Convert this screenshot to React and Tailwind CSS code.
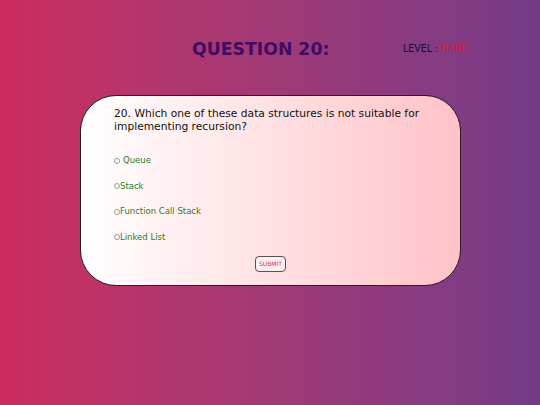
import React, { useState } from 'react';

const options = ['Queue', 'Stack', 'Function Call Stack', 'Linked List'];

const App = () => {
  const [selected, setSelected] = useState(null);

  return (
    <div
      className="w-[540px] h-[405px] bg-gradient-to-r from-[#cc2b5e] to-[#753a88] overflow-hidden"
      style={{ fontFamily: '"DejaVu Sans", Verdana, sans-serif' }}
    >
      <div className="relative h-[95px]">
        <h1 className="absolute left-[192px] top-[37px] text-[17.3px] leading-[24px] font-bold text-[#430a64]">
          QUESTION 20:
        </h1>
        <div
          className="absolute left-[403px] top-[41px] text-[10.5px] leading-[14px] text-[#1e0a2e]"
          style={{ fontFamily: '"DejaVu Sans Condensed", "DejaVu Sans", sans-serif' }}
        >
          LEVEL : <span className="text-[#d0203a]">HARD</span>
        </div>
      </div>

      <div className="ml-[80px] w-[381px] h-[191px] rounded-[36px] border border-[#222] bg-gradient-to-r from-white to-[#ffc2c8] pl-[33px] pr-[30px] pt-[11px] flex flex-col">
        <p className="text-[10.7px] leading-[13px] text-[#111] w-[315px]">
          20. Which one of these data structures is not suitable for implementing recursion?
        </p>
        <div className="flex flex-col gap-[12.5px] mt-[21px]">
          {options.map((opt, i) => (
            <label key={opt} className="flex items-center h-[13px] text-[8.5px] text-[#2f7a1c] cursor-pointer">
              <span
                onClick={() => setSelected(i)}
                className={`w-[6px] h-[6px] rounded-full border border-[#999] ${i === 0 ? 'mr-[3px]' : ''} ${selected === i ? 'bg-[#2f7a1c]' : 'bg-white'}`}
              ></span>
              {opt}
            </label>
          ))}
        </div>
        <div className="flex justify-center mt-[12px] pr-[3px]">
          <button className="w-[31px] h-[16px] rounded-[4px] border border-[#555] bg-[#ffeef0] text-[6px] text-[#e03040] leading-none">
            SUBMIT
          </button>
        </div>
      </div>
    </div>
  );
};

export default App;
